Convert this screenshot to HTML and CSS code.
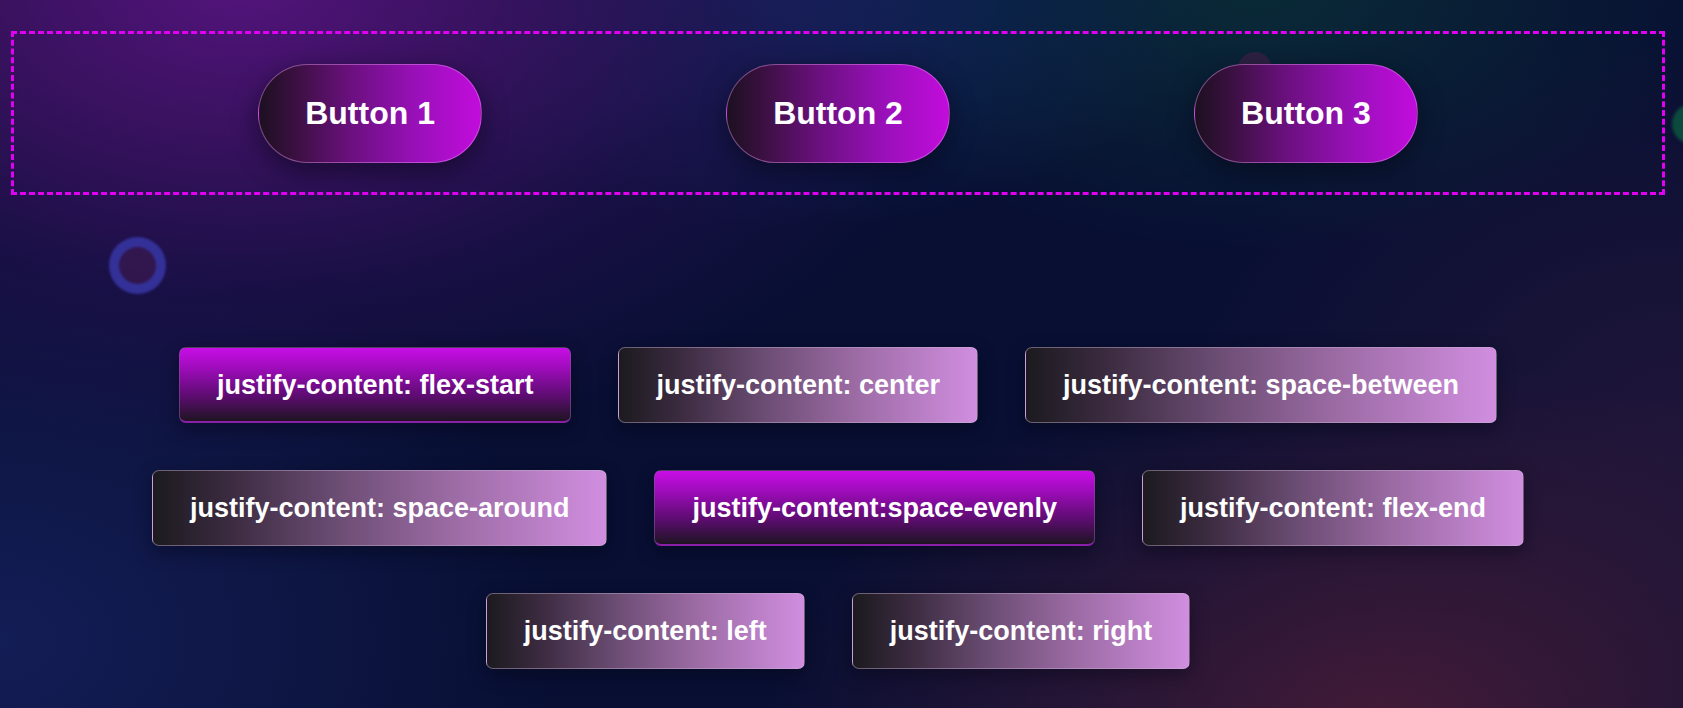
FILE: index.html
```html
<!DOCTYPE html>
<html lang="en">
<head>
<meta charset="utf-8">
<title>Flexbox buttons</title>
<link rel="stylesheet" href="styles.css">
</head>
<body>
<div class="page">
  <span class="bubble bubble-ring"></span>
  <span class="bubble bubble-dark"></span>
  <span class="bubble bubble-green"></span>

  <section class="demo-box">
    <button class="pill">Button 1</button>
    <button class="pill">Button 2</button>
    <button class="pill">Button 3</button>
  </section>

  <section class="options">
    <button class="opt opt-active">justify-content: flex-start</button>
    <button class="opt">justify-content: center</button>
    <button class="opt">justify-content: space-between</button>
    <button class="opt">justify-content: space-around</button>
    <button class="opt opt-active">justify-content:space-evenly</button>
    <button class="opt">justify-content: flex-end</button>
    <button class="opt">justify-content: left</button>
    <button class="opt">justify-content: right</button>
  </section>
</div>
</body>
</html>
```
FILE: styles.css
```css
* { box-sizing: border-box; }

html, body {
  margin: 0;
  padding: 0;
}

body {
  font-family: "Liberation Sans", Arial, sans-serif;
  background: #080f33;
}

.page {
  position: relative;
  width: 100%;
  height: 708px;
  overflow: hidden;
  padding-top: 31px;
  background:
    radial-gradient(ellipse 760px 480px at 240px -20px, rgba(88,20,128,0.95) 0%, rgba(62,18,100,0.85) 35%, rgba(40,16,85,0.5) 65%, rgba(40,16,85,0) 100%),
    radial-gradient(ellipse 420px 240px at 790px -10px, rgba(14,42,96,0.9) 0%, rgba(14,42,96,0) 100%),
    radial-gradient(ellipse 480px 260px at 1260px -10px, rgba(10,52,56,0.75) 0%, rgba(10,52,56,0) 100%),
    radial-gradient(ellipse 620px 360px at 1380px 720px, rgba(72,28,56,0.9) 0%, rgba(72,28,56,0) 100%),
    radial-gradient(ellipse 520px 380px at 1683px 420px, rgba(40,24,60,0.7) 0%, rgba(40,24,60,0) 100%),
    radial-gradient(ellipse 560px 420px at 0px 640px, rgba(22,32,92,0.85) 0%, rgba(22,32,92,0) 100%),
    #080f33;
}

.bubble {
  position: absolute;
  border-radius: 50%;
  z-index: 0;
}

.bubble-ring {
  left: 109px;
  top: 237px;
  width: 57px;
  height: 57px;
  border: 10px solid rgba(52,56,170,0.8);
  background: rgba(58,24,80,0.75);
  filter: blur(0.8px);
}

.bubble-dark {
  left: 1238px;
  top: 52px;
  width: 34px;
  height: 34px;
  background: #2d2142;
}

.bubble-green {
  left: 1672px;
  top: 104px;
  width: 40px;
  height: 40px;
  background: #0c4a3e;
  filter: blur(1.5px);
}

.demo-box {
  position: relative;
  z-index: 1;
  margin: 0 18px 0 11px;
  height: 164px;
  border: 3px dashed #e000f2;
  display: flex;
  justify-content: space-evenly;
  align-items: center;
}

.pill {
  font-family: "Liberation Sans", Arial, sans-serif;
  font-weight: bold;
  font-size: 32px;
  line-height: 37px;
  color: #ffffff;
  padding: 30px 46px;
  border-radius: 50px;
  border: 1px solid rgba(230,150,240,0.45);
  background: linear-gradient(90deg, #1c1020 0%, #3e1045 18%, #6c1080 42%, #9810b8 70%, #c20cdc 100%);
  box-shadow: 0 8px 24px rgba(5,5,20,0.55);
  cursor: pointer;
}

.options {
  position: relative;
  z-index: 1;
  margin: 152px 18px 0 11px;
  display: flex;
  flex-wrap: wrap;
  justify-content: center;
  column-gap: 47px;
  row-gap: 47px;
}

.opt {
  font-family: "Liberation Sans", Arial, sans-serif;
  font-weight: bold;
  font-size: 27px;
  line-height: 32px;
  color: #ffffff;
  padding: 21px 37px;
  border-radius: 7px;
  border: 1px solid rgba(200,180,210,0.45);
  background: linear-gradient(90deg, #1c1a1f 0%, #3d2c42 18%, #6a4c72 40%, #9a6aa2 65%, #d18ee0 100%);
  box-shadow: 0 6px 18px rgba(5,5,20,0.45);
  cursor: pointer;
}

.opt-active {
  border: 1px solid rgba(120,90,140,0.6);
  border-bottom: 2px solid #8a20a8;
  padding-bottom: 20px;
  background: linear-gradient(180deg, #c80ee6 0%, #9a0cb6 30%, #5e0c72 65%, #1e1422 100%);
}
```
